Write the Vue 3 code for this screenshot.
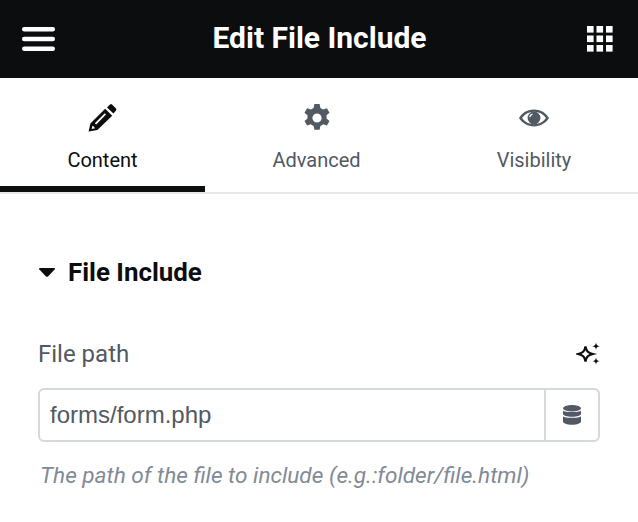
<script setup>
const tabs = [
  { id: 'content', label: 'Content', active: true },
  { id: 'advanced', label: 'Advanced' },
  { id: 'visibility', label: 'Visibility' }
]
const squares = []
for (let r = 0; r < 3; r++) for (let c = 0; c < 3; c++) squares.push({ x: c * 9.5, y: r * 9.5 })
</script>

<template>
  <div class="panel">
    <header class="top">
      <svg class="menu" viewBox="0 0 33 24" width="33" height="24" aria-hidden="true">
        <rect x="0" y="0" width="33" height="4.4" rx="2.2" />
        <rect x="0" y="9.8" width="33" height="4.4" rx="2.2" />
        <rect x="0" y="19.6" width="33" height="4.4" rx="2.2" />
      </svg>
      <h1 class="title">Edit File Include</h1>
      <svg class="apps" viewBox="0 0 26 26" width="26" height="26" aria-hidden="true">
        <rect v-for="(s, i) in squares" :key="i" :x="s.x" :y="s.y" width="6.6" height="6.6" />
      </svg>
    </header>

    <nav class="tabs">
      <div v-for="t in tabs" :key="t.id" class="tab" :class="{ active: t.active }">
        <svg v-if="t.id === 'content'" class="ticon" viewBox="1 0 30 30" width="30" height="30" aria-hidden="true">
          <path fill-rule="evenodd" d="M1.6 28.6 L3.4 20.6 L18.2 5.8 L25.2 12.8 L10.4 27 Z M4.6 26 L8.2 25.2 L5.6 22.6 Z M17.8 10.2 L7.8 20.2 L9.2 21.4 L19 11.4 Z" />
          <path d="M20 4.4 L23 1.4 Q24 .6 25 1.4 L29 5.4 Q29.8 6.4 29 7.4 L26.4 10.6 Z" />
        </svg>
        <svg v-else-if="t.id === 'advanced'" class="ticon" viewBox="0 0 30 30" width="30" height="30" aria-hidden="true">
          <path fill-rule="evenodd" d="M12.4 1 h5.2 l.8 3.9 a10.6 10.6 0 0 1 2.7 1.6 l3.8-1.3 2.6 4.5-3 2.6 a10.6 10.6 0 0 1 0 3.2 l3 2.6-2.6 4.5-3.8-1.3 a10.6 10.6 0 0 1-2.7 1.6 l-.8 3.9 h-5.2 l-.8-3.9 a10.6 10.6 0 0 1-2.7-1.6 l-3.8 1.3-2.6-4.5 3-2.6 a10.6 10.6 0 0 1 0-3.2 l-3-2.6 2.6-4.5 3.8 1.3 a10.6 10.6 0 0 1 2.7-1.6 Z M15 10.4 a4.6 4.6 0 1 0 0 9.2 a4.6 4.6 0 0 0 0-9.2 Z" />
        </svg>
        <svg v-else class="ticon" viewBox="0 0 30 30" width="30" height="30" aria-hidden="true">
          <path fill-rule="evenodd" d="M0 15 C3.5 9.4 9 6.6 15 6.6 S26.5 9.4 30 15 C26.5 20.6 21 23.4 15 23.4 S3.5 20.6 0 15 Z M3 15 C6 19.2 10.3 21.2 15 21.2 S24 19.2 27 15 C24 10.8 19.7 8.8 15 8.8 S6 10.8 3 15 Z" />
          <path fill-rule="evenodd" d="M15 8.6 a6.4 6.4 0 1 1 0 12.8 a6.4 6.4 0 0 1 0-12.8 Z M13.6 10.6 C11.6 11 10.4 12.4 10.2 14.2 L11.4 14.2 C11.7 13 12.4 12.2 13.6 11.8 Z" />
        </svg>
        <span class="tlabel">{{ t.label }}</span>
      </div>
    </nav>

    <section class="body">
      <div class="section-head">
        <svg class="caret" viewBox="0 0 16 9" width="16" height="9" aria-hidden="true">
          <path d="M.6 0 H15.4 Q16.2 .3 15.8 1.2 L9 8.4 Q8 9.2 7 8.4 L.2 1.2 Q-.2 .3 .6 0 Z" />
        </svg>
        <h2 class="section-title">File Include</h2>
      </div>

      <div class="label-row">
        <span class="label">File path</span>
        <svg class="spark" viewBox="0 0 24 24" width="24" height="24" aria-hidden="true">
          <path class="spark-line" d="M9.5 4.4 C10.4 9.2 11.6 10.6 16.8 12 C11.6 13.4 10.4 14.8 9.5 19.6 C8.6 14.8 7.4 13.4 2.2 12 C7.4 10.6 8.6 9.2 9.5 4.4 Z" />
          <path d="M20 .6 C20.5 3.2 21 3.7 23.6 4.2 C21 4.7 20.5 5.2 20 7.8 C19.5 5.2 19 4.7 16.4 4.2 C19 3.7 19.5 3.2 20 .6 Z" />
          <path d="M20 15.4 C20.5 18 21 18.5 23.6 19 C21 19.5 20.5 20 20 22.6 C19.5 20 19 19.5 16.4 19 C19 18.5 19.5 18 20 15.4 Z" />
        </svg>
      </div>

      <div class="field">
        <span class="value">forms/form.php</span>
        <span class="addon">
          <svg viewBox="0 0 18 20" width="18" height="20" aria-hidden="true">
            <ellipse cx="9" cy="3.2" rx="9" ry="3.2" />
            <path d="M0 5.4 C2 7.6 16 7.6 18 5.4 V9 C18 10.6 14 11.8 9 11.8 S0 10.6 0 9 Z" />
            <path d="M0 11.2 C2 13.4 16 13.4 18 11.2 V16.6 C18 18.4 14 19.8 9 19.8 S0 18.4 0 16.6 Z" />
          </svg>
        </span>
      </div>

      <p class="hint">The path of the file to include (e.g.:folder/file.html)</p>
    </section>
  </div>
</template>

<style scoped>
.panel {
  width: 638px;
  height: 522px;
  background: #fff;
  font-family: Roboto, "Liberation Sans", sans-serif;
  overflow: hidden;
}
.top {
  height: 78px;
  background: #0c0d0e;
  display: grid;
  grid-template-columns: 1fr auto 1fr;
  align-items: center;
  padding: 0 23px 0 24px;
  box-sizing: border-box;
}
.menu { fill: #fff; margin-left: -2px; }
.apps { fill: #fff; justify-self: end; margin-right: 2px; }
.title {
  margin: 0;
  color: #fff;
  font-size: 30px;
  font-weight: 700;
  line-height: 1;
  padding-bottom: 2px;
}
.tabs {
  display: grid;
  grid-template-columns: 205px 223px 212px;
  height: 116px;
  box-sizing: border-box;
  border-bottom: 2px solid #e6e8ea;
}
.tab {
  display: flex;
  flex-direction: column;
  align-items: center;
  color: #515962;
  padding-top: 25px;
  height: 114px;
  box-sizing: border-box;
}
.tab.active {
  color: #0c0d0e;
  border-bottom: 6px solid #0c0d0e;
}
.ticon { fill: currentColor; display: block; }
.tlabel {
  margin-top: 15px;
  font-size: 20px;
  line-height: 24px;
}
.body { padding: 0 38px; }
.section-head {
  display: flex;
  align-items: center;
  gap: 13px;
  padding-top: 61px;
}
.caret { fill: #0c0d0e; margin-left: 1px; }
.section-title {
  margin: 0;
  color: #0c0d0e;
  font-size: 25.9px;
  font-weight: 700;
  line-height: 34px;
}
.label-row {
  display: flex;
  align-items: center;
  justify-content: space-between;
  margin-top: 49px;
  height: 32px;
}
.label {
  color: #515962;
  font-size: 24px;
  line-height: 32px;
}
.spark { fill: #0c0d0e; }
.spark-line { fill: none; stroke: #0c0d0e; stroke-width: 2.2; stroke-linejoin: miter; }
.field {
  margin-top: 18px;
  height: 54px;
  box-sizing: border-box;
  border: 2px solid #d5d8dc;
  border-radius: 6px;
  display: flex;
  align-items: center;
}
.value {
  flex: 1;
  padding-left: 10px;
  color: #515962;
  font-family: "Liberation Sans", Arial, sans-serif;
  font-size: 24px;
}
.addon {
  width: 54px;
  height: 100%;
  box-sizing: border-box;
  border-left: 2px solid #d5d8dc;
  display: flex;
  align-items: center;
  justify-content: center;
}
.addon svg { fill: #515962; }
.hint {
  margin: 20px 0 0 2px;
  color: #818a96;
  font-size: 22.6px;
  font-style: italic;
  line-height: 28px;
}
</style>
